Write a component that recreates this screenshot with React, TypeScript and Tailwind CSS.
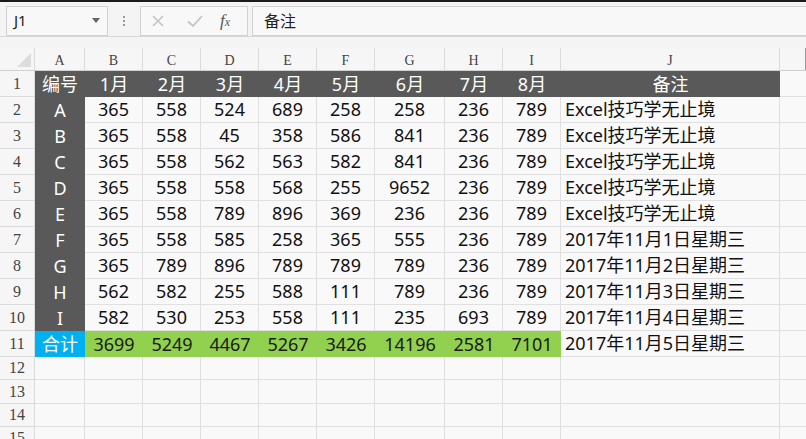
import React from "react";

const colWidths = [50, 58, 58, 58, 58, 58, 70, 58, 58, 219];
const letters = ["A", "B", "C", "D", "E", "F", "G", "H", "I", "J"];
const widthClass = [
  "w-[50px]",
  "w-[58px]",
  "w-[58px]",
  "w-[58px]",
  "w-[58px]",
  "w-[58px]",
  "w-[70px]",
  "w-[58px]",
  "w-[58px]",
  "w-[219px]",
];

const note = "Excel技巧学无止境";
const rows: (string | number)[][] = [
  ["A", 365, 558, 524, 689, 258, 258, 236, 789, note],
  ["B", 365, 558, 45, 358, 586, 841, 236, 789, note],
  ["C", 365, 558, 562, 563, 582, 841, 236, 789, note],
  ["D", 365, 558, 558, 568, 255, 9652, 236, 789, note],
  ["E", 365, 558, 789, 896, 369, 236, 236, 789, note],
  ["F", 365, 558, 585, 258, 365, 555, 236, 789, "2017年11月1日星期三"],
  ["G", 365, 789, 896, 789, 789, 789, 236, 789, "2017年11月2日星期三"],
  ["H", 562, 582, 255, 588, 111, 789, 236, 789, "2017年11月3日星期三"],
  ["I", 582, 530, 253, 558, 111, 235, 693, 789, "2017年11月4日星期三"],
];
const total = ["合计", 3699, 5249, 4467, 5267, 3426, 14196, 2581, 7101, "2017年11月5日星期三"];
const head = ["编号", "1月", "2月", "3月", "4月", "5月", "6月", "7月", "8月", "备注"];

function RowNum({ n, h }: { n: number | string; h: string }) {
  return (
    <div
      className={`w-[35px] ${h} shrink-0 flex items-center justify-center border-b border-r border-[#dadada] bg-[#f6f6f6] text-[16px] text-[#444] font-['Liberation_Serif',serif]`}
    >
      {n}
    </div>
  );
}

export default function App() {
  return (
    <div className="w-[806px] h-[439px] overflow-hidden bg-[#f4f4f4] border-t-2 border-[#1a1a1a] font-['Noto_Sans','Noto_Sans_CJK_SC',sans-serif]">
      {/* Formula bar */}
      <div className="flex items-center h-[35px] pt-[4px] pl-[6px] pb-[1px] border-b border-[#d6d6d6]">
        <div className="w-[102px] h-[30px] border border-[#d2d2d2] bg-[#f8f8f8] flex items-center justify-between pl-[7px] pr-[7px]">
          <span className="text-[15px] text-[#222]">J1</span>
          <svg width="8" height="5" viewBox="0 0 8 5">
            <path d="M0 0h8L4 5z" fill="#666" />
          </svg>
        </div>
        <div className="w-[32px] flex flex-col items-center gap-[2px]">
          <span className="w-[2px] h-[2px] bg-[#999]" />
          <span className="w-[2px] h-[2px] bg-[#999]" />
          <span className="w-[2px] h-[2px] bg-[#999]" />
        </div>
        <div className="w-[108px] h-[30px] border border-[#d2d2d2] bg-[#f8f8f8] flex items-center">
          <svg width="16" height="16" viewBox="0 0 16 16" className="ml-[9px]">
            <path d="M3 3l10 10M13 3L3 13" stroke="#c4c4c4" strokeWidth="1.6" />
          </svg>
          <svg width="18" height="16" viewBox="0 0 18 16" className="ml-[20px]">
            <path d="M2 8.5l5 4.5 9-10" stroke="#c4c4c4" strokeWidth="1.8" fill="none" />
          </svg>
          <span className="ml-[16px] text-[17px] italic text-[#555] font-['Liberation_Serif',serif] leading-none">
            f<span className="text-[12px]">x</span>
          </span>
        </div>
        <div className="ml-[4px] flex-1 h-[30px] border border-[#d2d2d2] border-r-0 bg-[#f8f8f8] flex items-center pl-[11px]">
          <span className="text-[16px] text-[#222]">备注</span>
        </div>
      </div>

      {/* Sheet */}
      <div className="mt-[11px]">
        {/* Column headers */}
        <div className="flex h-[23px] bg-[#f6f6f6] border-b border-[#d0d0d0]">
          <div className="w-[35px] shrink-0 flex items-end justify-end pr-[3px] pb-[3px] border-r border-[#dadada]">
            <svg width="14" height="14" viewBox="0 0 14 14">
              <path d="M14 0V14H0z" fill="#dcdcdc" />
            </svg>
          </div>
          {letters.map((l, i) => (
            <div
              key={l}
              className={`${widthClass[i]} shrink-0 flex items-center justify-center pt-[3px] border-r border-[#dcdcdc] text-[14px] text-[#444] font-['Liberation_Serif',serif]`}
            >
              {l}
            </div>
          ))}
          <div className="flex-1 border-r border-[#999]" />
        </div>

        {/* Row 1 */}
        <div className="flex">
          <RowNum n={1} h="h-[26px]" />
          {head.map((t, i) => (
            <div
              key={i}
              className={`${widthClass[i]} h-[26px] shrink-0 flex items-center justify-center bg-[#595959] text-white text-[18px]`}
            >
              {t}
            </div>
          ))}
          <div className="flex-1 h-[26px] bg-[#f9f9f9] border-b border-[#e0e0e0]" />
        </div>

        {rows.map((r, ri) => (
          <div key={ri} className="flex">
            <RowNum n={ri + 2} h="h-[26px]" />
            {r.map((v, i) => {
              if (i === 0)
                return (
                  <div
                    key={i}
                    className="w-[50px] h-[26px] shrink-0 flex items-center justify-center bg-[#595959] text-white text-[18px]"
                  >
                    {v}
                  </div>
                );
              if (i === 9)
                return (
                  <div
                    key={i}
                    className="w-[219px] h-[26px] shrink-0 flex items-center pl-[4px] bg-[#f9f9f9] border-b border-r border-[#e0e0e0] text-[18px] text-[#111] whitespace-nowrap"
                  >
                    {v}
                  </div>
                );
              return (
                <div
                  key={i}
                  className={`${widthClass[i]} h-[26px] shrink-0 flex items-center justify-center bg-[#f9f9f9] border-b border-r border-[#e0e0e0] text-[18px] text-[#111]`}
                >
                  {v}
                </div>
              );
            })}
            <div className="flex-1 h-[26px] bg-[#f9f9f9] border-b border-[#e0e0e0]" />
          </div>
        ))}

        {/* Row 11 totals */}
        <div className="flex">
          <RowNum n={11} h="h-[26px]" />
          {total.map((v, i) => {
            if (i === 0)
              return (
                <div
                  key={i}
                  className="w-[50px] h-[26px] shrink-0 flex items-center justify-center bg-[#00b0f0] text-white text-[18px]"
                >
                  {v}
                </div>
              );
            if (i === 9)
              return (
                <div
                  key={i}
                  className="w-[219px] h-[26px] shrink-0 flex items-center pl-[4px] bg-[#f9f9f9] border-b border-r border-[#e0e0e0] text-[18px] text-[#111] whitespace-nowrap"
                >
                  {v}
                </div>
              );
            return (
              <div
                key={i}
                className={`${widthClass[i]} h-[26px] shrink-0 flex items-center justify-center bg-[#92d050] text-[18px] text-[#1a1a1a]`}
              >
                {v}
              </div>
            );
          })}
          <div className="flex-1 h-[26px] bg-[#f9f9f9] border-b border-[#e0e0e0]" />
        </div>

        {/* Empty rows */}
        {[
          [12, "h-[23px]"],
          [13, "h-[24px]"],
          [14, "h-[23px]"],
          [15, "h-[23px]"],
        ].map(([n, h]) => (
          <div key={n} className="flex">
            <RowNum n={n} h={h as string} />
            {colWidths.map((_, i) => (
              <div
                key={i}
                className={`${widthClass[i]} ${h} shrink-0 bg-[#f9f9f9] border-b border-r border-[#e0e0e0]`}
              />
            ))}
            <div className={`flex-1 ${h} bg-[#f9f9f9] border-b border-[#e0e0e0]`} />
          </div>
        ))}
      </div>
    </div>
  );
}
